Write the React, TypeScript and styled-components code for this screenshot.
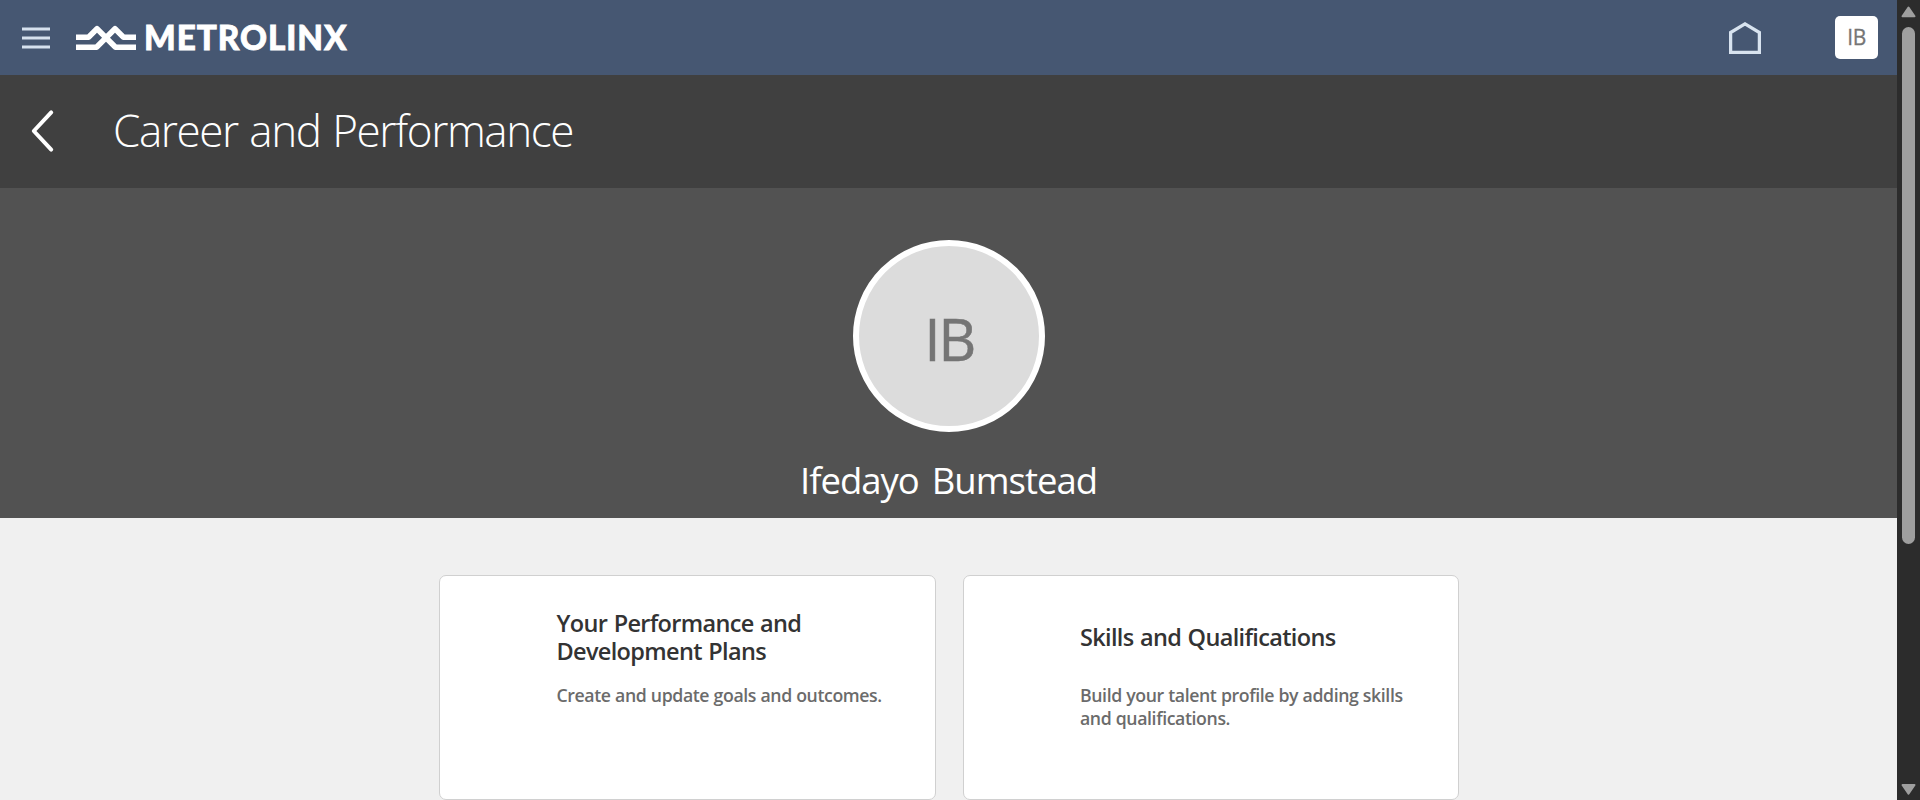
import React from 'react';
import styled, { createGlobalStyle } from 'styled-components';

const GlobalStyle = createGlobalStyle`
  * { box-sizing: border-box; }
  body {
    margin: 0;
    overflow: hidden;
    background: #f0f0f0;
    font-family: "Open Sans", "Noto Sans", sans-serif;
  }
`;

const Window = styled.div`
  display: flex;
  width: 100%;
  height: 800px;
`;

const Page = styled.div`
  flex: 1;
  min-width: 0;
  overflow: hidden;
`;

const TopBar = styled.header`
  display: flex;
  align-items: center;
  height: 75px;
  padding: 0 19px 0 22px;
  background: #465772;
`;

const MenuButton = styled.button`
  display: block;
  width: 28px;
  height: 22px;
  padding: 0;
  border: 0;
  background: none;
`;

const Brand = styled.a`
  display: flex;
  align-items: center;
  flex: 1;
  margin-left: 26px;
  color: #fff;
`;

const BrandName = styled.span`
  margin: 0 0 1px 8px;
  font-family: Lato, sans-serif;
  font-weight: 900;
  font-size: 33.3px;
  line-height: 40px;
  letter-spacing: 0.95px;
  -webkit-text-stroke: 0.8px #fff;
`;

const HomeLink = styled.a`
  display: block;
  height: 32px;
  margin: 1px 74px 0 0;
`;

const UserBadge = styled.div`
  display: flex;
  align-items: center;
  justify-content: center;
  width: 43px;
  height: 43px;
  padding-bottom: 1px;
  border-radius: 5px;
  background: #fff;
  color: #757575;
  font-size: 21px;
  line-height: 26px;
  letter-spacing: -0.5px;
  -webkit-text-stroke: 0.3px #757575;
`;

const TitleBar = styled.div`
  display: flex;
  align-items: center;
  height: 113px;
  padding: 0 31px 2px;
  background: #404040;
  color: #fff;
`;

const PageTitle = styled.h1`
  margin: 0 0 1px 56px;
  font-weight: 300;
  font-size: 44px;
  line-height: 60px;
  letter-spacing: -1.4px;
  word-spacing: 1.5px;
  white-space: nowrap;
`;

const Hero = styled.section`
  display: flex;
  flex-direction: column;
  align-items: center;
  height: 330px;
  padding-top: 52px;
  background: #525252;
`;

const Avatar = styled.div`
  display: flex;
  align-items: center;
  justify-content: center;
  width: 192px;
  height: 192px;
  padding: 3px 0 0 1px;
  border: 6px solid #fff;
  border-radius: 50%;
  background: #dcdcdc;
  color: #757575;
  font-size: 59px;
  line-height: 80px;
  letter-spacing: -2.5px;
  -webkit-text-stroke: 0.5px #757575;
`;

const PersonName = styled.h2`
  margin: 23px 0 0;
  color: #fff;
  font-weight: 400;
  font-size: 36.5px;
  line-height: 50px;
  letter-spacing: -1px;
  word-spacing: 4.5px;
  white-space: nowrap;
`;

const Cards = styled.main`
  display: flex;
  justify-content: center;
  gap: 27px;
  padding: 57px 0 0 1px;
`;

const Card = styled.article`
  width: 496.5px;
  height: 225px;
  padding: 33px 50px 0 116.5px;
  border: 1px solid #d0d0d0;
  border-radius: 7px;
  background: #fff;
`;

const CardTitle = styled.h3`
  display: flex;
  align-items: center;
  height: 56px;
  margin: 0;
  color: #333;
  font-weight: 600;
  font-size: 23.5px;
  line-height: 28px;
  letter-spacing: -0.66px;
  word-spacing: 1px;
`;

const CardText = styled.p`
  margin: 19px 0 0;
  color: #6b6b6b;
  font-weight: 600;
  font-size: 17.7px;
  line-height: 23px;
  letter-spacing: -0.39px;
  word-spacing: 0.2px;
  white-space: pre;
`;

const Scrollbar = styled.div`
  display: flex;
  flex-direction: column;
  align-items: center;
  width: 23px;
  padding: 6px 0 5px;
  background: #2c2c2c;
`;

const ScrollThumb = styled.div`
  width: 13px;
  height: 517px;
  margin: 9px 0 auto;
  border-radius: 7px;
  background: #9f9f9f;
`;

const MenuIcon = () => (
  <svg width="28" height="22" viewBox="0 0 28 22" stroke="#d6e1ee" strokeWidth="3">
    <path d="M0 2h28M0 11h28M0 20h28" />
  </svg>
);

const WaveMark = () => (
  <svg width="60" height="26" viewBox="0 0 60 26" fill="none" stroke="#fff" strokeWidth="5.6" strokeLinejoin="round">
    <path d="M0 12.2h12.5L21 3.7 39.5 22.2H60" />
    <path d="M0 22.2h20.5L39 3.7l8.5 8.5H60" />
  </svg>
);

const HomeIcon = () => (
  <svg width="32" height="32" viewBox="0 0 32 32" fill="none" stroke="#d8e3ef" strokeWidth="3.3">
    <path d="M1.6 30.4V10.5L16 1.9l14.4 8.6v19.9z" />
  </svg>
);

const BackIcon = () => (
  <svg width="26" height="44" viewBox="0 0 26 44" fill="none" stroke="#fff" strokeWidth="4" strokeLinejoin="round">
    <path d="M20.2 3.4L2.8 22l17.4 18.6" strokeLinecap="round" />
  </svg>
);

const ScrollArrow = ({ down = false }: { down?: boolean }) => (
  <svg width="15" height="12" viewBox="0 0 15 12" fill="#9f9f9f" stroke="#9f9f9f" strokeWidth="2" strokeLinejoin="round">
    <path d={down ? 'M1.5 2h12l-6 8.6z' : 'M1.5 10.2h12l-6-8.6z'} />
  </svg>
);

const cards = [
  {
    title: 'Your Performance and Development Plans',
    text: 'Create and update goals and outcomes.',
  },
  {
    title: 'Skills and Qualifications',
    text: 'Build your talent profile by adding skills\nand qualifications.',
  },
];

export default function App() {
  return (
    <>
      <GlobalStyle />
      <Window>
        <Page>
          <TopBar>
            <MenuButton aria-label="Menu"><MenuIcon /></MenuButton>
            <Brand>
              <WaveMark />
              <BrandName>METROLINX</BrandName>
            </Brand>
            <HomeLink aria-label="Home"><HomeIcon /></HomeLink>
            <UserBadge>IB</UserBadge>
          </TopBar>
          <TitleBar>
            <BackIcon />
            <PageTitle>Career and Performance</PageTitle>
          </TitleBar>
          <Hero>
            <Avatar>IB</Avatar>
            <PersonName>Ifedayo Bumstead</PersonName>
          </Hero>
          <Cards>
            {cards.map((card) => (
              <Card key={card.title}>
                <CardTitle>{card.title}</CardTitle>
                <CardText>{card.text}</CardText>
              </Card>
            ))}
          </Cards>
        </Page>
        <Scrollbar>
          <ScrollArrow />
          <ScrollThumb />
          <ScrollArrow down />
        </Scrollbar>
      </Window>
    </>
  );
}
